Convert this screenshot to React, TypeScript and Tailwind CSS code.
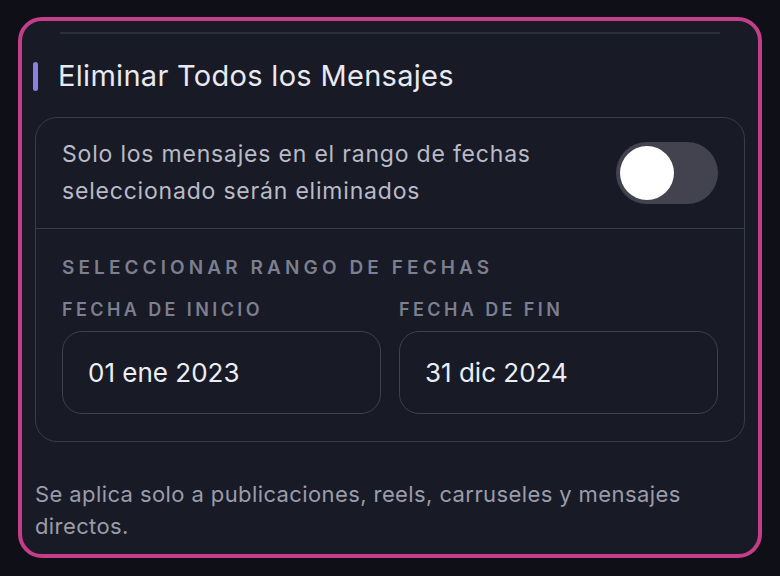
export default function App() {
  return (
    <div
      className="h-[576px] w-[780px] bg-[#0e0f17] pl-[18px] pt-[17px]"
      style={{ fontFamily: "Inter, 'Noto Sans', sans-serif" }}
    >
      <div className="h-[541px] w-[744px] overflow-hidden rounded-[24px] border-[4px] border-[#c43d88] bg-[#181a26] px-[13px]">
        {/* divider of the section above */}
        <div className="mx-[25px] mt-[11px] h-[2px] bg-[#2c2f3c]" />

        <div className="mt-[27px] flex items-center">
          <span className="ml-[-2px] h-[29px] w-[5px] rounded-full bg-[#8b7fe0]" />
          <h2 className="ml-[20px] text-[29px] leading-[30px] font-normal tracking-[0.3px] text-[#e8e9f1]">
            Eliminar Todos los Mensajes
          </h2>
        </div>

        <div className="mt-[26px] rounded-[22px] border-[1.5px] border-[#393c49]">
          <div className="flex h-[110px] items-center justify-between pl-[26px] pr-[26px]">
            <p className="text-[23px] leading-[37px] tracking-[0.8px] text-[#b9bbc6]">
              Solo los mensajes en el rango de fechas
              <br />
              seleccionado serán eliminados
            </p>
            <button
              type="button"
              aria-pressed="false"
              className="flex h-[62px] w-[102px] items-center rounded-full bg-[#42434e] pl-[4px]"
            >
              <span className="h-[54px] w-[54px] rounded-full bg-white" />
            </button>
          </div>

          <div className="border-t-[1.5px] border-[#393c49] px-[26px] pb-[27px] pt-[27px]">
            <p className="text-[19px] leading-[24px] font-semibold tracking-[4.1px] text-[#7c7f8f]">
              SELECCIONAR RANGO DE FECHAS
            </p>
            <div className="mt-[19px] grid grid-cols-2 gap-[18px]">
              {[
                { label: "FECHA DE INICIO", value: "01 ene 2023" },
                { label: "FECHA DE FIN", value: "31 dic 2024" },
              ].map((f) => (
                <div key={f.label}>
                  <p className="text-[18px] leading-[22px] font-semibold tracking-[3.4px] text-[#7c7f8f]">
                    {f.label}
                  </p>
                  <div className="mt-[10px] flex h-[83px] items-center rounded-[20px] border-[1.5px] border-[#3e414e] pl-[25px] text-[26px] text-[#eceef5]">
                    {f.value}
                  </div>
                </div>
              ))}
            </div>
          </div>
        </div>

        <p className="mt-[36px] text-[22px] leading-[32px] tracking-[0.4px] text-[#9a9cab]">
          Se aplica solo a publicaciones, reels, carruseles y mensajes directos.
        </p>
      </div>
    </div>
  );
}
